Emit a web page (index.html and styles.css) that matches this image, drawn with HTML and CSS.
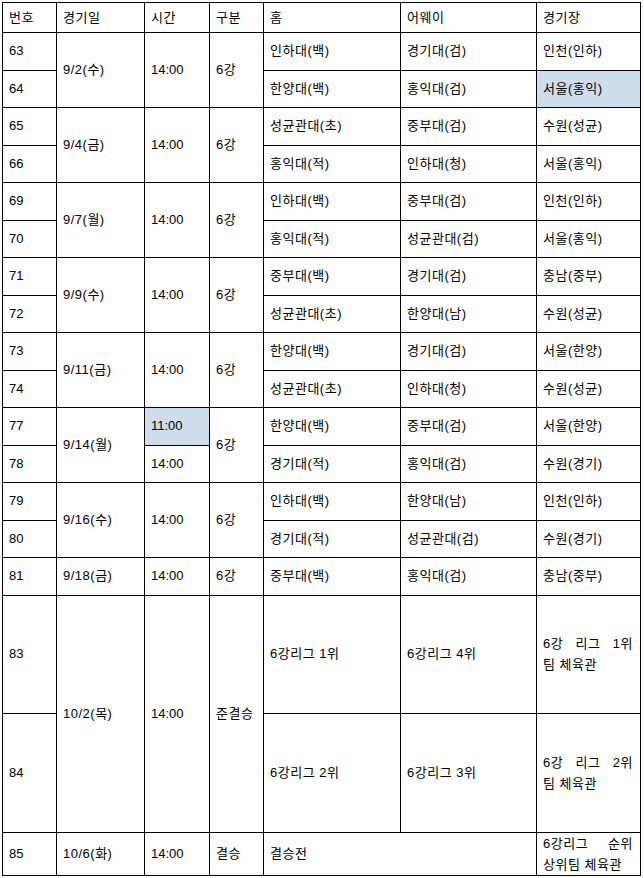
FILE: index.html
```html
<!DOCTYPE html>
<html lang="ko">
<head>
<meta charset="utf-8">
<link rel="stylesheet" href="styles.css">
</head>
<body>
<table class="sched">
  <colgroup>
    <col class="c-no"><col class="c-date"><col class="c-time"><col class="c-div"><col class="c-home"><col class="c-away"><col class="c-venue">
  </colgroup>
  <tr class="r-head"><td>번호</td><td>경기일</td><td>시간</td><td>구분</td><td>홈</td><td>어웨이</td><td>경기장</td></tr>
  <tr class="r"><td class="n">63</td><td rowspan="2">9/2(수)</td><td class="n" rowspan="2">14:00</td><td rowspan="2">6강</td><td>인하대(백)</td><td>경기대(검)</td><td>인천(인하)</td></tr>
  <tr class="r"><td class="n">64</td><td>한양대(백)</td><td>홍익대(검)</td><td class="hl">서울(홍익)</td></tr>
  <tr class="r"><td class="n">65</td><td rowspan="2">9/4(금)</td><td class="n" rowspan="2">14:00</td><td rowspan="2">6강</td><td>성균관대(초)</td><td>중부대(검)</td><td>수원(성균)</td></tr>
  <tr class="r"><td class="n">66</td><td>홍익대(적)</td><td>인하대(청)</td><td>서울(홍익)</td></tr>
  <tr class="r"><td class="n">69</td><td rowspan="2">9/7(월)</td><td class="n" rowspan="2">14:00</td><td rowspan="2">6강</td><td>인하대(백)</td><td>중부대(검)</td><td>인천(인하)</td></tr>
  <tr class="r"><td class="n">70</td><td>홍익대(적)</td><td>성균관대(검)</td><td>서울(홍익)</td></tr>
  <tr class="r"><td class="n">71</td><td rowspan="2">9/9(수)</td><td class="n" rowspan="2">14:00</td><td rowspan="2">6강</td><td>중부대(백)</td><td>경기대(검)</td><td>충남(중부)</td></tr>
  <tr class="r"><td class="n">72</td><td>성균관대(초)</td><td>한양대(남)</td><td>수원(성균)</td></tr>
  <tr class="r"><td class="n">73</td><td rowspan="2">9/11(금)</td><td class="n" rowspan="2">14:00</td><td rowspan="2">6강</td><td>한양대(백)</td><td>경기대(검)</td><td>서울(한양)</td></tr>
  <tr class="r"><td class="n">74</td><td>성균관대(초)</td><td>인하대(청)</td><td>수원(성균)</td></tr>
  <tr class="r"><td class="n">77</td><td rowspan="2">9/14(월)</td><td class="n hl">11:00</td><td rowspan="2">6강</td><td>한양대(백)</td><td>중부대(검)</td><td>서울(한양)</td></tr>
  <tr class="r"><td class="n">78</td><td class="n">14:00</td><td>경기대(적)</td><td>홍익대(검)</td><td>수원(경기)</td></tr>
  <tr class="r"><td class="n">79</td><td rowspan="2">9/16(수)</td><td class="n" rowspan="2">14:00</td><td rowspan="2">6강</td><td>인하대(백)</td><td>한양대(남)</td><td>인천(인하)</td></tr>
  <tr class="r"><td class="n">80</td><td>경기대(적)</td><td>성균관대(검)</td><td>수원(경기)</td></tr>
  <tr class="r"><td class="n">81</td><td>9/18(금)</td><td class="n">14:00</td><td>6강</td><td>중부대(백)</td><td>홍익대(검)</td><td>충남(중부)</td></tr>
  <tr class="r-big"><td class="n">83</td><td rowspan="2">10/2(목)</td><td class="n" rowspan="2">14:00</td><td rowspan="2">준결승</td><td>6강리그 1위</td><td>6강리그 4위</td><td class="wrap"><div class="just">6강 리그 1위</div><div>팀 체육관</div></td></tr>
  <tr class="r-big"><td class="n">84</td><td>6강리그 2위</td><td>6강리그 3위</td><td class="wrap"><div class="just">6강 리그 2위</div><div>팀 체육관</div></td></tr>
  <tr class="r-last"><td class="n">85</td><td>10/6(화)</td><td class="n">14:00</td><td>결승</td><td colspan="2">결승전</td><td class="wrap"><div class="just">6강리그 순위</div><div>상위팀 체육관</div></td></tr>
</table>
</body>
</html>
```
FILE: styles.css
```css
html, body {
  margin: 0;
  padding: 0;
  background: #ffffff;
}
body {
  padding: 2px 0 0 2px;
  font-family: "Liberation Sans", "Noto Sans CJK KR", sans-serif;
  font-size: 13px;
  color: #000000;
}
.sched {
  border-collapse: collapse;
  table-layout: fixed;
  width: 639px;
}
.c-no { width: 54px; }
.c-date { width: 88px; }
.c-time { width: 65px; }
.c-div { width: 54px; }
.c-home { width: 137px; }
.c-away { width: 136px; }
.c-venue { width: 104px; }
.sched td {
  border: 1px solid #000000;
  padding: 0 6px;
  vertical-align: middle;
  text-align: left;
  white-space: nowrap;
  line-height: 16px;
  letter-spacing: 0.5px;
}
.sched td.n { letter-spacing: 0; }
.r-head { height: 30px; }
.r { height: 37.5px; }
.r-big { height: 118.5px; }
.r-last { height: 43px; }
.sched td.hl { background: #cedcec; }
.sched td.wrap {
  white-space: normal;
  line-height: 21px;
  padding-right: 7px;
}
.just {
  text-align: justify;
  text-align-last: justify;
}
```
